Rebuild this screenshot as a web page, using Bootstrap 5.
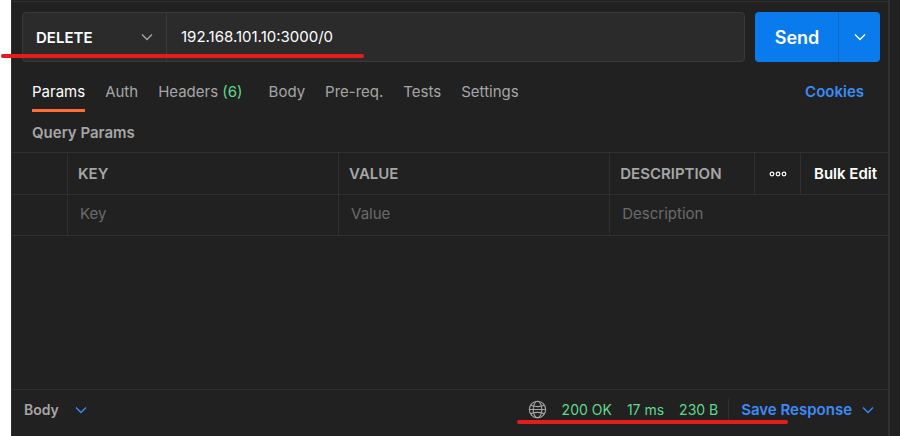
<!DOCTYPE html>
<html lang="en" data-bs-theme="dark">
<head>
<meta charset="utf-8">
<meta name="viewport" content="width=device-width, initial-scale=1">
<title>API request</title>
<link href="https://cdn.jsdelivr.net/npm/bootstrap@5.3.0/dist/css/bootstrap.min.css" rel="stylesheet">
<style>
  :root { --panel: #212121; --line: #303030; --field: #2b2b2b; --muted: #a6a6a6; --blue: #3d8bf8; --green: #5fd98b; }
  body { background: #fff; color: #fff; font-family: Inter, "Liberation Sans", sans-serif; font-size: 15px; line-height: 20px; }
  .workspace { margin-left: 11px; background: var(--panel); border-left: 1px solid var(--line); }
  .request-pane { border-right: 2px solid #303030; min-width: 0; }
  .side-gutter { width: 10px; }
  .top-rule { height: 2px; border-bottom: 1px solid var(--line); }
  .request-line { padding: 10px 8px 0 10px; gap: 10px; }
  .url-box { background: var(--field); border: 1px solid #3a3a3a; border-radius: 4px; height: 50px; }
  .method { width: 144px; border-right: 1px solid #3a3a3a; }
  .method select { appearance: none; background: transparent; border: 0; color: #fff; font-weight: 600; padding: 2px 0 0 13px; }
  .method select option { background: var(--field); }
  .method svg { right: 13px; top: 20px; pointer-events: none; }
  .url-box input { background: transparent; border: 0; color: #fff; padding: 0 14px; min-width: 0; }
  .send-group .btn { --bs-btn-bg: #097bed; --bs-btn-border-color: #097bed; --bs-btn-color: #fff; --bs-btn-hover-bg: #0a6fd4; --bs-btn-hover-color: #fff; --bs-btn-border-radius: 4px; border: 0; height: 50px; }
  .send-group { width: 125px; }
  .send-group .send-main { flex: 0 0 84px; font-size: 18px; font-weight: 600; padding: 0; }
  .send-group .send-more { flex: 0 0 42px; padding: 0; border-left: 1px solid #0a6bce; }
  .tabs { padding: 17px 24px 0 20px; }
  .tabs .nav { gap: 20px; }
  .tabs .nav-link { color: var(--muted); padding: 3px 0 7px; border-bottom: 3px solid transparent; }
  .tabs .nav-link.active { color: #fff; border-color: #ff6c37; }
  .tabs .wide-gap { margin-right: 6px; }
  .tabs .cookies { padding-top: 3px; }
  .count { color: var(--green); }
  .blue { color: var(--blue); }
  h2.section { font-size: 15px; line-height: 20px; font-weight: 600; color: var(--muted); margin: 0; padding: 11px 20px 9px; }
  .params { table-layout: fixed; border-collapse: separate; border-spacing: 0; border-top: 1px solid var(--line); }
  .params th, .params td { border-bottom: 1px solid var(--line); border-right: 1px solid var(--line); padding: 0 10px; vertical-align: middle; color: var(--muted); }
  .params th { height: 42px; font-weight: 600; }
  .params td { height: 41px; padding: 0 12px 2px; }
  .params tr > :last-child { border-right: 0; }
  .col-tick { width: 56px; }
  .col-text { width: 30.95%; }
  .col-more { width: 46px; }
  .col-bulk { width: 87px; }
  .params input { background: transparent; border: 0; padding: 0; color: #fff; height: 20px; display: block; }
  .params input::placeholder { color: #6b6b6b; opacity: 1; }
  .plain { background: transparent; border: 0; padding: 0; color: #fff; font-weight: 600; }
  .params .bulk { padding: 0 11px 0 0; text-align: right; }
  .params .more { padding: 0; }
  .response-bar { border-top: 1px solid var(--line); padding: 8px 14px 14px 12px; height: 47px; }
  .plain.body-toggle { color: var(--muted); gap: 16px; font-size: 14px; padding-bottom: 1px; }
  .stats { color: var(--green); gap: 15px; font-size: 14px; padding-bottom: 1px; }
  .plain.save { color: var(--blue); border-left: 1px solid var(--line); padding-left: 12px; margin-left: 10px; height: 22px; gap: 10px; }
  .underline { height: 4px; border-radius: 2px; background: #e51c1c; pointer-events: none; }
  .under-url { left: 1px; top: 54px; width: 363px; }
  .under-stats { left: 517px; bottom: 12px; width: 271px; }
</style>
</head>
<body>
<svg class="d-none" aria-hidden="true">
  <symbol id="chevron" viewBox="0 0 12 8"><path d="M1 1.5 6 6.5 11 1.5" fill="none" stroke="currentColor" stroke-width="1.3"/></symbol>
</svg>
<div class="position-relative vh-100 d-flex">
  <div class="workspace d-flex flex-grow-1">
    <main class="request-pane d-flex flex-column flex-grow-1">
      <div class="top-rule"></div>
      <form class="request-line d-flex">
        <div class="url-box d-flex flex-grow-1">
          <div class="method position-relative flex-shrink-0">
            <select class="w-100 h-100" aria-label="Method"><option>DELETE</option><option>GET</option><option>POST</option><option>PUT</option></select>
            <svg class="position-absolute" width="12" height="8" color="#a6a6a6" aria-hidden="true"><use href="#chevron"/></svg>
          </div>
          <input class="flex-grow-1" type="text" value="192.168.101.10:3000/0" aria-label="Request URL">
        </div>
        <div class="btn-group send-group flex-shrink-0">
          <button type="button" class="btn send-main">Send</button>
          <button type="button" class="btn send-more d-flex align-items-center justify-content-center" aria-label="Send options"><svg width="12" height="8" aria-hidden="true"><use href="#chevron"/></svg></button>
        </div>
      </form>
      <div class="tabs d-flex justify-content-between">
        <nav class="nav flex-nowrap" aria-label="Request settings">
          <a class="nav-link active" href="#params">Params</a>
          <a class="nav-link" href="#auth">Auth</a>
          <a class="nav-link wide-gap" href="#headers">Headers <span class="count">(6)</span></a>
          <a class="nav-link" href="#body">Body</a>
          <a class="nav-link" href="#prereq">Pre-req.</a>
          <a class="nav-link" href="#tests">Tests</a>
          <a class="nav-link" href="#settings">Settings</a>
        </nav>
        <a class="cookies blue fw-semibold text-decoration-none" href="#cookies">Cookies</a>
      </div>
      <section id="params">
        <h2 class="section">Query Params</h2>
        <table class="params w-100">
          <colgroup><col class="col-tick"><col class="col-text"><col class="col-text"><col><col class="col-more"><col class="col-bulk"></colgroup>
          <thead>
            <tr>
              <th></th><th scope="col">KEY</th><th scope="col">VALUE</th><th scope="col">DESCRIPTION</th>
              <th class="more"><button type="button" class="plain d-block mx-auto" aria-label="Columns"><svg class="d-block" width="18" height="6" fill="none" stroke="currentColor" stroke-width="1.2" aria-hidden="true"><circle cx="3" cy="3" r="1.8"/><circle cx="9" cy="3" r="1.8"/><circle cx="15" cy="3" r="1.8"/></svg></button></th>
              <th class="bulk"><button type="button" class="plain">Bulk Edit</button></th>
            </tr>
          </thead>
          <tbody>
            <tr>
              <td></td>
              <td><input class="w-100" type="text" placeholder="Key" aria-label="Key"></td>
              <td><input class="w-100" type="text" placeholder="Value" aria-label="Value"></td>
              <td colspan="3"><input class="w-100" type="text" placeholder="Description" aria-label="Description"></td>
            </tr>
          </tbody>
        </table>
      </section>
      <footer class="response-bar d-flex align-items-center justify-content-between mt-auto">
        <button type="button" class="plain body-toggle d-flex align-items-center">Body <svg class="blue" width="12" height="8" aria-hidden="true"><use href="#chevron"/></svg></button>
        <div class="d-flex align-items-center">
          <div class="stats d-flex align-items-center">
            <svg width="19" height="19" viewBox="0 0 19 19" fill="none" stroke="#a6a6a6" stroke-width="1.1" role="img" aria-label="Network"><circle cx="9.5" cy="9.5" r="8.2"/><ellipse cx="9.5" cy="9.5" rx="4.3" ry="8.2"/><path d="M2.6 5.2Q9.5 8 16.4 5.2M2.6 13.8Q9.5 11 16.4 13.8M1.3 9.5H17.7"/></svg>
            <span>200 OK</span><span>17 ms</span><span>230 B</span>
          </div>
          <button type="button" class="plain save d-flex align-items-center">Save Response <svg width="12" height="8" aria-hidden="true"><use href="#chevron"/></svg></button>
        </div>
      </footer>
    </main>
    <div class="side-gutter flex-shrink-0"></div>
  </div>
  <div class="underline under-url position-absolute"></div>
  <div class="underline under-stats position-absolute"></div>
</div>
<script src="https://cdn.jsdelivr.net/npm/bootstrap@5.3.0/dist/js/bootstrap.bundle.min.js"></script>
</body>
</html>
